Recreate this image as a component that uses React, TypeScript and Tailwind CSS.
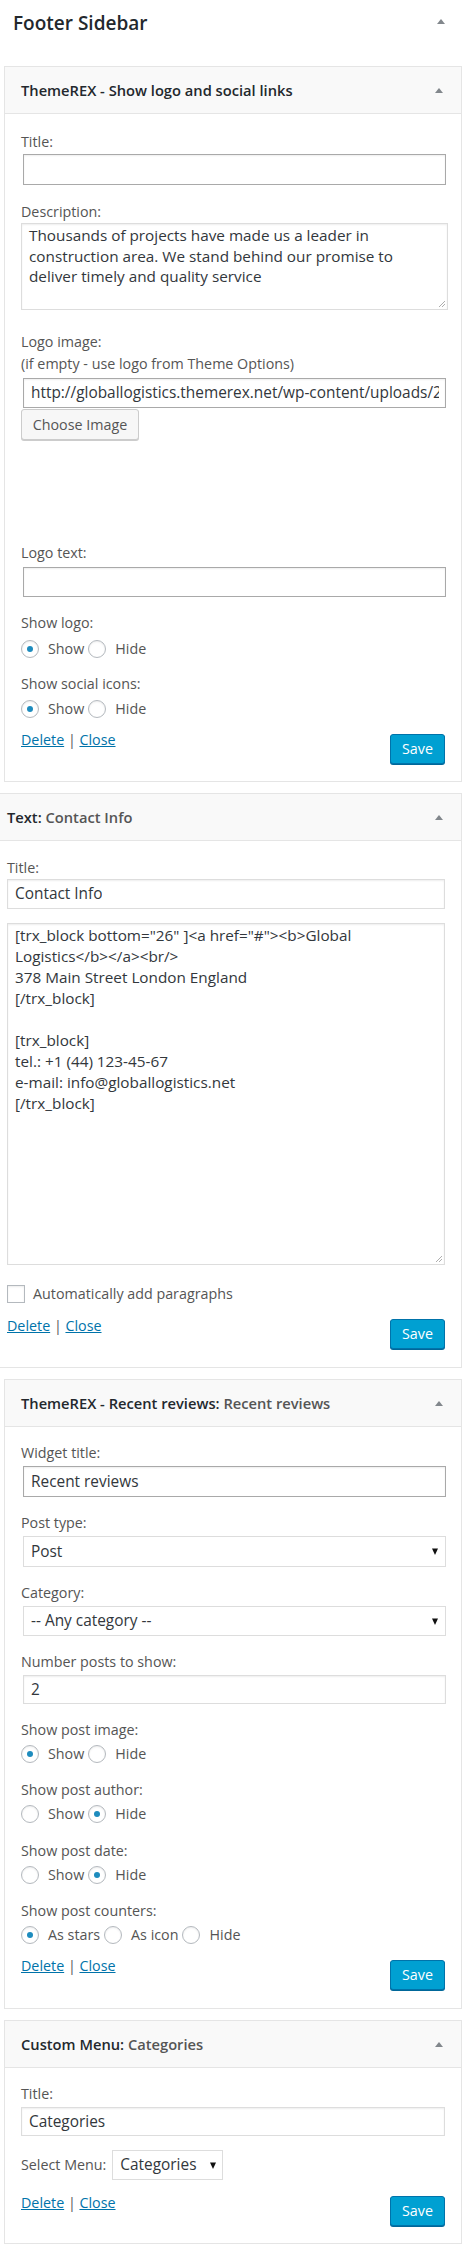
import React from "react";

function Caret() {
  return (
    <svg width="8" height="5" viewBox="0 0 8 5" className="shrink-0">
      <polygon points="4,0 8,5 0,5" fill="#82878c" />
    </svg>
  );
}

function SelectArrow() {
  return (
    <svg width="6" height="7" viewBox="0 0 6 7" className="shrink-0">
      <polygon points="0,0.5 6,0.5 3,7" fill="#111" />
    </svg>
  );
}

function Label({ children, className = "" }: { children: React.ReactNode; className?: string }) {
  return <div className={"text-[14.3px] leading-[20px] text-[#555] " + className}>{children}</div>;
}

function Radio({ checked }: { checked: boolean }) {
  return (
    <span className="flex h-[18px] w-[18px] shrink-0 items-center justify-center rounded-full border border-[#b4b9be] bg-white shadow-[inset_0_1px_2px_rgba(0,0,0,0.08)]">
      {checked && <span className="h-[6px] w-[6px] rounded-full bg-[#1e8cbe]" />}
    </span>
  );
}

function RadioRow({ items, className = "" }: { items: [string, boolean][]; className?: string }) {
  return (
    <div className={"flex h-[18px] items-center text-[14.3px] leading-[20px] text-[#555] " + className}>
      {items.map(([label, checked], i) => (
        <React.Fragment key={i}>
          <Radio checked={checked} />
          <span className="ml-[9px] mr-[4px]">{label}</span>
        </React.Fragment>
      ))}
    </div>
  );
}

function Footer({ className = "", btnClass = "" }: { className?: string; btnClass?: string }) {
  return (
    <div className={"flex items-start justify-between " + className}>
      <div className="text-[14.3px] leading-[20px] text-[#555]">
        <a href="#" className="text-[#0073aa] underline">Delete</a> | <a href="#" className="text-[#0073aa] underline">Close</a>
      </div>
      <button className={"h-[30px] w-[55px] rounded-[3px] border border-[#0073aa] bg-[#00a0d2] text-[14.3px] leading-[20px] text-white shadow-[0_1px_0_#006799] " + btnClass}>
        Save
      </button>
    </div>
  );
}

function WidgetHeader({ dark, light, padClass }: { dark: string; light?: string; padClass: string }) {
  return (
    <div className={"flex h-[47px] items-center justify-between border-b border-[#e5e5e5] bg-[#f9f9f9] pr-[18px] " + padClass}>
      <div className="text-[14.7px] font-semibold leading-[20px] text-[#23282d]">
        {dark}
        {light && <span className="text-[#555]">{light}</span>}
      </div>
      <Caret />
    </div>
  );
}

function TextBox({ value, className = "" }: { value?: string; className?: string }) {
  return (
    <div className={"flex items-center bg-white pl-[7px] pr-[6px] text-[15.4px] text-[#32373c] shadow-[inset_0_1px_2px_rgba(0,0,0,0.07)] " + className}>
      <div className="overflow-hidden whitespace-nowrap">{value}</div>
    </div>
  );
}

function SelectBox({ value, className = "" }: { value: string; className?: string }) {
  return (
    <div className={"flex items-center justify-between border border-[#ddd] bg-white pl-[7px] text-[15.4px] text-[#32373c] " + className}>
      <span>{value}</span>
      <SelectArrow />
    </div>
  );
}

function Grip() {
  return (
    <svg width="7" height="7" viewBox="0 0 7 7" className="absolute bottom-[2px] right-[2px]">
      <line x1="1" y1="7" x2="7" y2="1" stroke="#999" strokeWidth="0.8" />
      <line x1="4" y1="7" x2="7" y2="4" stroke="#999" strokeWidth="0.8" />
    </svg>
  );
}

export default function App() {
  return (
    <div className="min-h-[2254px] w-[469px] bg-white font-['Open_Sans',sans-serif]">
      {/* Sidebar title */}
      <div className="flex h-[66px] items-start justify-between pl-[13px] pr-[24px] pt-[10px]">
        <div className="text-[19px] font-semibold leading-[27px] text-[#23282d]">Footer Sidebar</div>
        <div className="pt-[9px]">
          <Caret />
        </div>
      </div>

      {/* Widget 1 */}
      <div className="ml-[4px] w-[458px] border border-[#e5e5e5] bg-white">
        <WidgetHeader dark="ThemeREX - Show logo and social links" padClass="pl-[16px]" />
        <div className="flex flex-col pl-[16px] pr-[16px] pb-[17px]">
          <Label className="mt-[18px]">Title:</Label>
          <TextBox className="ml-[2px] mt-[2px] h-[31px] w-[423px] border border-[#a9a9a9]" />
          <Label className="mt-[17px]">Description:</Label>
          <div className="relative mt-[1px] h-[87px] w-[427px] border border-[#ddd] bg-white px-[7px] pt-[1px] text-[15.3px] leading-[20.5px] text-[#32373c] shadow-[inset_0_1px_2px_rgba(0,0,0,0.07)]">
            Thousands of projects have made us a leader in construction area. We stand behind our promise to deliver timely and quality service
            <Grip />
          </div>
          <Label className="mt-[22px]">Logo image:</Label>
          <Label className="mt-[2px]">(if empty - use logo from Theme Options)</Label>
          <TextBox
            value="http://globallogistics.themerex.net/wp-content/uploads/2016/01/logo.png"
            className="ml-[2px] mt-[4px] h-[30px] w-[423px] border border-[#a9a9a9]"
          />
          <button className="mt-[1px] h-[31px] w-[118px] rounded-[3px] border border-[#ccc] bg-[#f7f7f7] text-[14.3px] text-[#555] shadow-[0_1px_0_#ccc]">
            Choose Image
          </button>
          <Label className="mt-[103px]">Logo text:</Label>
          <TextBox className="ml-[2px] mt-[4px] h-[30px] w-[423px] border border-[#a9a9a9]" />
          <Label className="mt-[16px]">Show logo:</Label>
          <RadioRow className="mt-[7px]" items={[["Show", true], ["Hide", false]]} />
          <Label className="mt-[16px]">Show social icons:</Label>
          <RadioRow className="mt-[6px]" items={[["Show", true], ["Hide", false]]} />
          <Footer className="mt-[12px]" btnClass="mt-[4px]" />
        </div>
      </div>

      {/* Widget 2: Text */}
      <div className="mt-[11px] w-[462px] border-y border-r border-[#e5e5e5] bg-white">
        <WidgetHeader dark="Text: " light="Contact Info" padClass="pl-[7px]" />
        <div className="flex flex-col pl-[7px] pr-[16px] pb-[18px]">
          <Label className="mt-[17px]">Title:</Label>
          <TextBox value="Contact Info" className="mt-[1px] h-[30px] w-[438px] border border-[#ddd]" />
          <div className="relative mt-[14px] h-[342px] w-[438px] border border-[#ddd] bg-white px-[7px] pt-[1px] text-[15.3px] leading-[21px] text-[#32373c] shadow-[inset_0_1px_2px_rgba(0,0,0,0.07)]">
            <div>[trx_block bottom="26" ]&lt;a href="#"&gt;&lt;b&gt;Global</div>
            <div>Logistics&lt;/b&gt;&lt;/a&gt;&lt;br/&gt;</div>
            <div>378 Main Street London England</div>
            <div>[/trx_block]</div>
            <div>&nbsp;</div>
            <div>[trx_block]</div>
            <div>tel.: +1 (44) 123-45-67</div>
            <div>e-mail: info@globallogistics.net</div>
            <div>[/trx_block]</div>
            <Grip />
          </div>
          <div className="mt-[20px] flex h-[18px] items-center">
            <span className="h-[18px] w-[18px] border border-[#b4b9be] bg-white shadow-[inset_0_1px_2px_rgba(0,0,0,0.08)]" />
            <span className="ml-[8px] text-[14.3px] leading-[20px] text-[#555]">Automatically add paragraphs</span>
          </div>
          <Footer className="mt-[13px]" btnClass="mt-[3px]" />
        </div>
      </div>

      {/* Widget 3: Recent reviews */}
      <div className="ml-[4px] mt-[11px] w-[458px] border border-[#e5e5e5] bg-white">
        <WidgetHeader dark="ThemeREX - Recent reviews: " light="Recent reviews" padClass="pl-[16px]" />
        <div className="flex flex-col pl-[16px] pr-[16px] pb-[18px]">
          <Label className="mt-[16px]">Widget title:</Label>
          <TextBox value="Recent reviews" className="ml-[2px] mt-[3px] h-[31px] w-[423px] border border-[#a9a9a9]" />
          <Label className="mt-[16px]">Post type:</Label>
          <SelectBox value="Post" className="ml-[2px] mt-[3px] h-[31px] w-[423px] pr-[7px]" />
          <Label className="mt-[16px]">Category:</Label>
          <SelectBox value="-- Any category --" className="ml-[2px] mt-[3px] h-[30px] w-[423px] pr-[7px]" />
          <Label className="mt-[16px]">Number posts to show:</Label>
          <TextBox value="2" className="ml-[2px] mt-[3px] h-[29px] w-[423px] border border-[#ddd]" />
          <Label className="mt-[16px]">Show post image:</Label>
          <RadioRow className="mt-[5px]" items={[["Show", true], ["Hide", false]]} />
          <Label className="mt-[17px]">Show post author:</Label>
          <RadioRow className="mt-[5px]" items={[["Show", false], ["Hide", true]]} />
          <Label className="mt-[18px]">Show post date:</Label>
          <RadioRow className="mt-[5px]" items={[["Show", false], ["Hide", true]]} />
          <Label className="mt-[17px]">Show post counters:</Label>
          <RadioRow className="mt-[5px]" items={[["As stars", true], ["As icon", false], ["Hide", false]]} />
          <Footer className="mt-[12px]" btnClass="mt-[4px]" />
        </div>
      </div>

      {/* Widget 4: Custom Menu */}
      <div className="ml-[4px] mt-[11px] w-[458px] border border-[#e5e5e5] bg-white">
        <WidgetHeader dark="Custom Menu: " light="Categories" padClass="pl-[16px]" />
        <div className="flex flex-col pl-[16px] pr-[16px] pb-[17px]">
          <Label className="mt-[16px]">Title:</Label>
          <TextBox value="Categories" className="mt-[3px] h-[29px] w-[424px] border border-[#ddd]" />
          <div className="mt-[14px] flex h-[30px] items-center">
            <span className="text-[14.3px] leading-[20px] text-[#555]">Select Menu:</span>
            <SelectBox value="Categories" className="ml-[6px] h-[30px] w-[111px] pr-[6px]" />
          </div>
          <Footer className="mt-[13px]" btnClass="mt-[3px]" />
        </div>
      </div>
    </div>
  );
}
